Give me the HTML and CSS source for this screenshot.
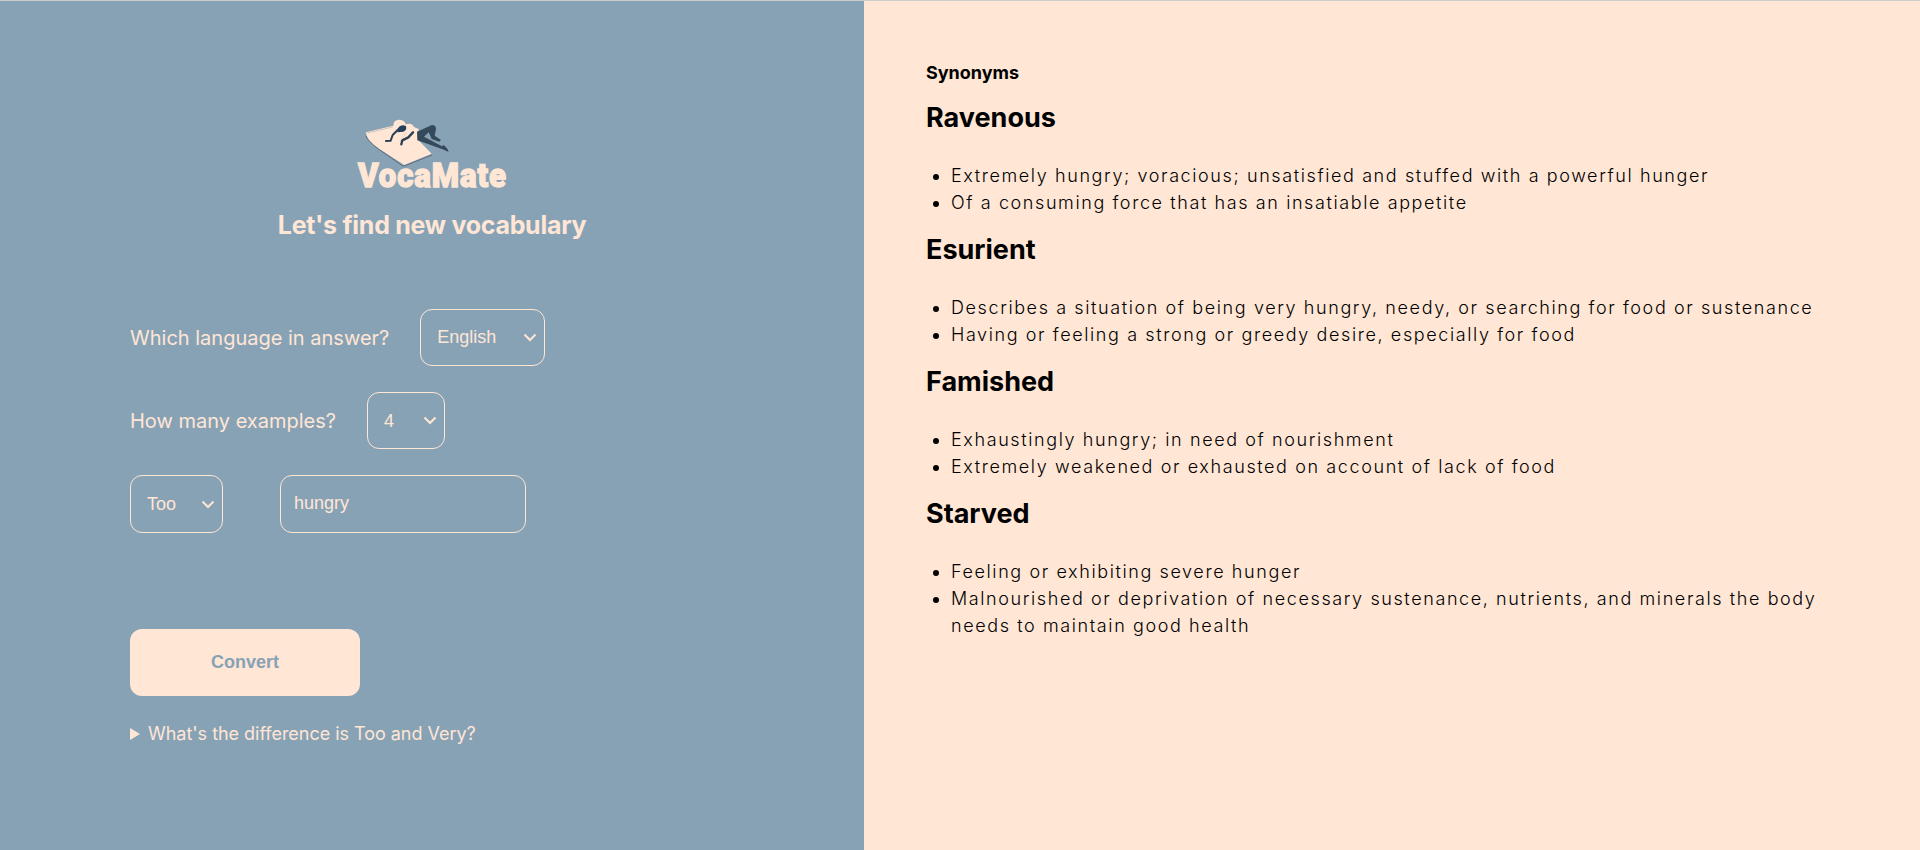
FILE: index.html
```html
<!DOCTYPE html>
<html lang="en">
<head>
<meta charset="utf-8">
<title>VocaMate</title>
<link rel="stylesheet" href="styles.css">
</head>
<body>
<main class="app">
  <section class="panel">
    <svg class="logo" width="190" height="95" viewBox="0 0 570 285" role="img" aria-label="VocaMate">
      <path d="M78 82 L160 62 Q160 44 178 44 Q196 46 197 58 Q215 52 222 66 L236 72 L234 104 L275 146 L193 180 L118 132 Q76 106 78 82Z" fill="#ffe6d5"/>
      <path d="M78 92 Q80 106 118 134 L190 184 L276 150" fill="none" stroke="#5b6b78" stroke-width="3"/>
      <path d="M82 84 L158 66" stroke="#b9b3ad" stroke-width="2"/>
      <path d="M231 80 L276 60 Q288 60 288 72 L284 92 L303 105 L298 110 L275 102 L266 82 L252 95 L306 124 L311 120 L322 131 L326 141 L308 133 L232 106Z" fill="#34495a"/>
      <path d="M176 66 Q188 56 198 64 Q202 76 190 80 L172 82Z" fill="#23405d"/>
      <path d="M176 72 L158 90 L152 107 L138 108" fill="none" stroke="#2c3f52" stroke-width="6" stroke-linecap="round" stroke-linejoin="round"/>
      <path d="M219 82 L205 97 L187 106 L184 118" fill="none" stroke="#2c3f52" stroke-width="7" stroke-linecap="round" stroke-linejoin="round"/>
      <path d="M200 82 L180 108" stroke="#d9c6b8" stroke-width="2"/>
      <text class="logo-word" x="54" y="246" textLength="447" lengthAdjust="spacingAndGlyphs">VocaMate</text>
    </svg>
    <h1 class="title">Let's find new vocabulary</h1>
    <form class="form">
      <div class="row">
        <label class="label">Which language in answer?</label>
        <div class="field select select-language"><span>English</span><svg class="chevron" viewBox="0 0 14 9"><path d="M1.500 1.500 L7 7 L12.500 1.500"/></svg></div>
      </div>
      <div class="row">
        <label class="label">How many examples?</label>
        <div class="field select select-count"><span>4</span><svg class="chevron" viewBox="0 0 14 9"><path d="M1.500 1.500 L7 7 L12.500 1.500"/></svg></div>
      </div>
      <div class="row row-word">
        <div class="field select select-adverb"><span>Too</span><svg class="chevron" viewBox="0 0 14 9"><path d="M1.500 1.500 L7 7 L12.500 1.500"/></svg></div>
        <input class="field word" type="text" value="hungry">
      </div>
      <button class="convert" type="button">Convert</button>
      <div class="hint"><svg class="marker" viewBox="0 0 10 12"><path d="M0 0 L10 6 L0 12Z"/></svg><span>What's the difference is Too and Very?</span></div>
    </form>
  </section>
  <section class="results">
    <h2 class="subtitle">Synonyms</h2>
    <h3 class="term">Ravenous</h3>
    <ul class="meanings">
      <li>Extremely hungry; voracious; unsatisfied and stuffed with a powerful hunger</li>
      <li>Of a consuming force that has an insatiable appetite</li>
    </ul>
    <h3 class="term">Esurient</h3>
    <ul class="meanings">
      <li>Describes a situation of being very hungry, needy, or searching for food or sustenance</li>
      <li>Having or feeling a strong or greedy desire, especially for food</li>
    </ul>
    <h3 class="term">Famished</h3>
    <ul class="meanings">
      <li>Exhaustingly hungry; in need of nourishment</li>
      <li>Extremely weakened or exhausted on account of lack of food</li>
    </ul>
    <h3 class="term">Starved</h3>
    <ul class="meanings">
      <li>Feeling or exhibiting severe hunger</li>
      <li>Malnourished or deprivation of necessary sustenance, nutrients, and minerals the body needs to maintain good health</li>
    </ul>
  </section>
</main>
</body>
</html>
```
FILE: styles.css
```css
* { box-sizing: border-box; }
body {
  margin: 0;
  font-family: Inter, "Liberation Sans", sans-serif;
  font-size: 18px;
  line-height: 27px;
  color: #000;
}
.app {
  display: flex;
  height: 850px;
  border-top: 1px solid #ccc;
  overflow: hidden;
}
.panel {
  width: 45%;
  padding: 104px 130px 0;
  display: flex;
  flex-direction: column;
  align-items: center;
  background: #88a2b5;
  color: #ffe6d5;
}
.logo { display: block; margin-right: -6px; }
.logo-word {
  font: 900 102px Roboto, sans-serif;
  letter-spacing: 3px;
  fill: #ffe6d5;
  stroke: #ffe6d5;
  stroke-width: 4px;
}
.title {
  margin: 6px 0 65px;
  font-size: 25px;
  line-height: 38px;
  font-weight: 700;
  letter-spacing: -0.28px;
  white-space: nowrap;
}
.form { width: 100%; }
.row {
  display: flex;
  align-items: center;
  gap: 31px;
  margin-bottom: 26px;
  height: 57px;
}
.row-word { gap: 57px; height: 58px; margin-bottom: 96px; }
.label { font-size: 20px; line-height: 30px; white-space: nowrap; }
.field {
  height: 100%;
  border: 1px solid #ffe6d5;
  border-radius: 12px;
  background: transparent;
  color: #ffe6d5;
  font-family: "Liberation Sans", Arial, sans-serif;
  font-size: 18px;
}
.select {
  display: flex;
  align-items: center;
  justify-content: space-between;
  padding: 0 7px 0 16px;
}
.select span { line-height: 20px; }
.select-language { width: 125px; }
.select-language span { padding-bottom: 2px; }
.select-count { width: 78px; }
.select-adverb { width: 93px; }
.chevron {
  width: 14px;
  height: 9px;
  fill: none;
  stroke: #ffe6d5;
  stroke-width: 2;
}
.word { width: 246px; padding: 0 12px 2px 13px; outline: none; }
.convert {
  display: block;
  width: 230px;
  height: 67px;
  padding: 0;
  border: 0;
  border-radius: 12px;
  background: #ffe6d5;
  color: #88a2b5;
  font: 700 18px "Liberation Sans", Arial, sans-serif;
}
.hint {
  display: flex;
  align-items: center;
  gap: 8px;
  margin-top: 24px;
  letter-spacing: -0.03px;
  white-space: nowrap;
}
.marker { width: 10px; height: 12px; fill: #ffe6d5; }
.results {
  width: 55%;
  padding: 58px 62px 0;
  background: #ffe6d5;
}
.subtitle { margin: 0; font-size: 18px; line-height: 27px; font-weight: 700; }
.term { margin: 11px 0 23px; font-size: 27px; line-height: 42px; font-weight: 700; }
.meanings {
  margin: 0 0 13px;
  padding-left: 25px;
  font-weight: 300;
  letter-spacing: 1.600px;
}
```
